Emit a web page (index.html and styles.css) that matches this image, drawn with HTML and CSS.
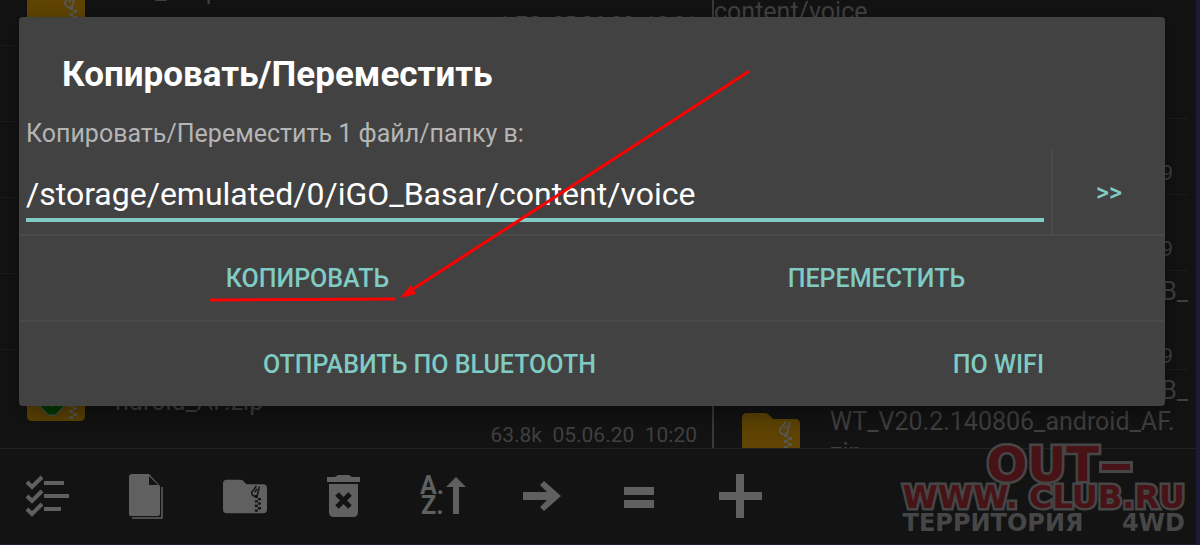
FILE: index.html
```html
<!DOCTYPE html>
<html lang="ru">
<head>
    <meta charset="UTF-8">
    <meta name="viewport" content="width=device-width, initial-scale=1.0">
    <title>Копировать/Переместить</title>
    <link rel="stylesheet" href="styles.css">
</head>
<body>
    <svg class="symbols" aria-hidden="true">
        <symbol id="zipFolder" viewBox="0 0 58 44">
            <path class="folder-body" d="M5 0H23Q26 0 28 3L31 6H53Q58 6 58 11V39Q58 44 53 44H5Q0 44 0 39V5Q0 0 5 0Z"/>
            <path class="zip-pull" d="M44 8L40 14A4 4 0 1 0 46 17L48 9M45 12L42 16" fill="none" stroke-width="2"/>
            <path class="zip-teeth" d="M42 21h4v3h-4zM46 24h4v3h-4zM42 27h4v3h-4zM46 30h4v3h-4zM42 33h4v3h-4zM46 36h4v3h-4zM42 39h4v3h-4z"/>
        </symbol>
    </svg>

    <main class="panes">
        <section class="pane pane-left">
            <ul class="files">
                <li class="file">
                    <svg class="file-icon"><use href="#zipFolder"/></svg>
                    <div class="file-info">
                        <div class="file-name">iGO_1.zip</div>
                        <div class="file-date">1.7G&nbsp; 05.06.20&nbsp; 10:21</div>
                    </div>
                </li>
                <li class="file"></li>
                <li class="file"></li>
                <li class="file"></li>
                <li class="file"></li>
                <li class="file">
                    <svg class="file-icon" viewBox="0 0 58 44">
                        <use href="#zipFolder"/>
                        <path d="M25 7L42 24L29 38H21L8 24Z" fill="#003c00" stroke="#4a4a4a" stroke-width="1.5"/>
                        <path d="M18 22H34L26 31Z" fill="#145014"/>
                    </svg>
                    <div class="file-info">
                        <div class="file-name">WT_V20.2.140806_a<br>ndroid_AF.zip</div>
                        <div class="file-date">63.8k&nbsp; 05.06.20&nbsp; 10:20</div>
                    </div>
                </li>
            </ul>
        </section>
        <section class="pane pane-right">
            <div class="path">content/voice</div>
            <ul class="files">
                <li class="file"></li>
                <li class="file">
                    <div class="file-info">
                        <div class="file-name">voice</div>
                        <div class="file-date">05.06.20&nbsp; 10:19</div>
                    </div>
                </li>
                <li class="file">
                    <div class="file-info">
                        <div class="file-name">voice</div>
                        <div class="file-date">05.06.20&nbsp; 10:19</div>
                    </div>
                </li>
                <li class="file">
                    <svg class="file-icon"><use href="#zipFolder"/></svg>
                    <div class="file-info">
                        <div class="file-name"><span class="file-line">B_</span>android_AF.zip</div>
                        <div class="file-date">05.06.20&nbsp; 10:19</div>
                    </div>
                </li>
                <li class="file">
                    <svg class="file-icon"><use href="#zipFolder"/></svg>
                    <div class="file-info">
                        <div class="file-name"><span class="file-line">B_</span>WT_V20.2.140806_android_AF.<br>zip</div>
                        <div class="file-date">05.06.20&nbsp; 10:19</div>
                    </div>
                </li>
            </ul>
        </section>
    </main>

    <nav class="toolbar">
        <button class="tool" type="button" aria-label="Выделить">
            <svg viewBox="0 0 44 46">
                <path d="M2 8L7 13L17 3M2 22L7 27L17 17M2 35L7 40L17 30" fill="none" stroke="currentColor" stroke-width="4"/>
                <path d="M19 7H39V11H19zM19 20H44V24H19zM19 33H36V37H19z"/>
            </svg>
        </button>
        <button class="tool" type="button" aria-label="Новый файл">
            <svg viewBox="0 0 44 46">
                <path d="M8 0H25L36 12V40Q36 42 34 42H7Q5 42 5 40V3Q5 0 8 0Z"/>
                <path d="M25 2V11H34Z" fill="#131313"/>
                <path d="M38 13V44H8" fill="none" stroke="currentColor" stroke-width="1.5"/>
            </svg>
        </button>
        <button class="tool tool-zip" type="button" aria-label="Архив">
            <svg viewBox="0 0 44 46"><use href="#zipFolder" x="0" y="5" width="44" height="35"/></svg>
        </button>
        <button class="tool" type="button" aria-label="Удалить">
            <svg viewBox="0 0 44 46">
                <path d="M5 3H13L16 1H27L30 3H38V8H5z"/>
                <path d="M7 10H36V38Q36 43 31 43H12Q7 43 7 38Z"/>
                <path d="M15 20L28 33M28 20L15 33" stroke="#131313" stroke-width="5"/>
            </svg>
        </button>
        <button class="tool" type="button" aria-label="Сортировка">
            <svg viewBox="0 0 44 46">
                <text class="sort-letter" x="-1" y="20">A.</text>
                <text class="sort-letter" x="0" y="40">Z.</text>
                <path d="M35 3L45 13H38V40H32V13H25z"/>
            </svg>
        </button>
        <button class="tool" type="button" aria-label="Вправо">
            <svg viewBox="0 0 44 46">
                <path d="M3 18H27L20 11L24 7L41 22L24 37L20 33L27 26H3z"/>
            </svg>
        </button>
        <button class="tool" type="button" aria-label="Равно">
            <svg viewBox="0 0 44 46">
                <path d="M5 13H35V21H5zM5 26H35V34H5z"/>
            </svg>
        </button>
        <button class="tool" type="button" aria-label="Добавить">
            <svg viewBox="0 0 44 46">
                <path d="M18 0H26V18H44V26H26V44H18V26H1V18H18z"/>
            </svg>
        </button>
    </nav>

    <div class="watermark">
        <div class="mark-top">OUT<span class="mark-dash"></span></div>
        <div class="mark-site">WWW. CLUB.RU</div>
        <div class="mark-note"><span>ТЕРРИТОРИЯ</span> <span>4WD</span></div>
    </div>

    <form class="dialog" role="dialog" aria-labelledby="dialogTitle">
        <h1 id="dialogTitle">Копировать/Переместить</h1>
        <div class="target">
            <label for="path">Копировать/Переместить 1 файл/папку в:</label>
            <input type="text" id="path" name="path" value="/storage/emulated/0/iGO_Basar/content/voice">
            <button class="browse" type="button">&gt;&gt;</button>
        </div>
        <div class="actions">
            <button type="button">КОПИРОВАТЬ</button>
            <button type="button">ПЕРЕМЕСТИТЬ</button>
        </div>
        <div class="actions actions-send">
            <button type="button">ОТПРАВИТЬ ПО BLUETOOTH</button>
            <button type="button">ПО WIFI</button>
        </div>
    </form>

    <svg class="pointer" width="1200" height="545" viewBox="0 0 1200 545" aria-hidden="true">
        <path d="M748 72L410 291M211 300L394 299" fill="none" stroke="#f00" stroke-width="3" stroke-linecap="round"/>
        <path d="M400 298L411 285L416 294Z" fill="#f00"/>
    </svg>
</body>
</html>
```

FILE: styles.css
```css
* {
    box-sizing: border-box;
}

body {
    --folder: #5f4403;
    --zip: #58574f;
    font-family: Roboto, "Noto Sans", sans-serif;
    background-color: #131313;
    color: #414141;
    margin: 0;
    height: 100vh;
    display: flex;
    flex-direction: column;
    position: relative;
    overflow: hidden;
    border-right: 4px solid #1b1b38;
    border-bottom: 1px solid #1b1b38;
}

.symbols {
    display: none;
}

button {
    background: none;
    border: none;
    padding: 0;
    font-family: inherit;
    cursor: pointer;
}

/* file lists */
.panes {
    flex: 1;
    min-height: 0;
    display: grid;
    grid-template-columns: 712fr 484fr;
    grid-template-rows: 100%;
    overflow: hidden;
}

.pane {
    min-width: 0;
    min-height: 0;
    display: flex;
    flex-direction: column;
}

.pane-left {
    justify-content: flex-end;
}

.pane-right {
    border-left: 2px solid #3a3a3a;
    padding-right: 8px;
}

.path {
    font-size: 25px;
    line-height: 24px;
    height: 43px;
    flex-shrink: 0;
}

.files {
    list-style: none;
    margin: 0;
    padding: 0;
}

.file {
    display: flex;
    align-items: center;
    gap: 30px;
    min-height: 76px;
    padding: 0 0 0 28px;
    border-bottom: 1px solid #1d1d1d;
}

.pane-left .file {
    padding-left: 27px;
}

.pane-left .file:last-child {
    border-bottom: none;
}

.file-icon {
    width: 58px;
    height: 44px;
    flex-shrink: 0;
}

.folder-body {
    fill: var(--folder);
}

.zip-pull {
    stroke: var(--zip);
}

.zip-teeth {
    fill: var(--zip);
}

.file-info {
    flex: 1;
    min-width: 0;
    align-self: flex-start;
    padding-top: 5px;
}

.file-name {
    font-size: 25px;
    line-height: 31px;
    white-space: nowrap;
}

.file-line {
    display: block;
    text-align: right;
}

.file-date {
    font-size: 21px;
    line-height: 36px;
    margin-bottom: -5px;
    padding-right: 15px;
    text-align: right;
}

/* bottom toolbar */
.toolbar {
    display: flex;
    align-items: center;
    gap: 55px;
    height: 96px;
    flex-shrink: 0;
    padding: 0 25px;
    border-top: 1px solid #222;
}

.tool {
    width: 44px;
    height: 46px;
    color: #606060;
}

.tool svg {
    display: block;
    width: 44px;
    height: 46px;
    fill: currentColor;
    overflow: visible;
}

.tool-zip {
    --folder: #606060;
    --zip: #131313;
}

.sort-letter {
    font-size: 25px;
    font-weight: bold;
}

/* site mark in the corner */
.watermark {
    position: absolute;
    right: 11px;
    bottom: 11px;
    font-family: "DejaVu Sans", sans-serif;
    font-weight: bold;
    color: #471316;
    -webkit-text-stroke: 5px #464646;
    paint-order: stroke fill;
    white-space: nowrap;
}

.mark-top {
    display: flex;
    align-items: center;
    padding-left: 84px;
    font-size: 48px;
    line-height: 34px;
}

.mark-dash {
    width: 34px;
    height: 12px;
    margin-top: 6px;
    background-color: #471316;
    border: 3px solid #464646;
}

.mark-site {
    font-size: 32px;
    line-height: 32px;
}

.mark-note {
    display: flex;
    justify-content: space-between;
    font-size: 24px;
    line-height: 20px;
    color: #464646;
    -webkit-text-stroke: 0;
}

/* dialog */
.dialog {
    position: absolute;
    top: 17px;
    left: 19px;
    right: 31px;
    background-color: #424242;
    border-radius: 4px;
    box-shadow: 0 8px 24px rgba(0, 0, 0, 0.4);
}

h1 {
    margin: 0;
    padding: 37px 43px 20px;
    font-size: 35px;
    line-height: 42px;
    font-weight: bold;
    color: #fff;
}

.target {
    display: grid;
    grid-template-columns: 1fr 114px;
    grid-template-rows: 34px 84px;
    column-gap: 7px;
    padding-left: 7px;
}

label {
    grid-column: 1 / -1;
    font-size: 25px;
    line-height: 36px;
    color: #b5b5b5;
}

input {
    align-self: start;
    width: 100%;
    height: 72px;
    padding: 20px 0 0;
    border: none;
    border-bottom: 4px solid #80cbc4;
    background: none;
    outline: none;
    font-family: inherit;
    font-size: 32px;
    color: #fff;
}

.dialog button {
    font-size: 25px;
    font-weight: 500;
    color: #80cbc4;
}

.dialog .browse {
    border-left: 2px solid #4a4a4a;
}

.actions {
    display: grid;
    grid-template-columns: 1fr 1fr;
    height: 86px;
    padding: 0 4px;
    border-top: 2px solid #4a4a4a;
}

.actions-send {
    grid-template-columns: 5fr 2fr;
}

/* red hand-drawn arrow */
.pointer {
    position: absolute;
    top: 0;
    left: 0;
    pointer-events: none;
}
```
